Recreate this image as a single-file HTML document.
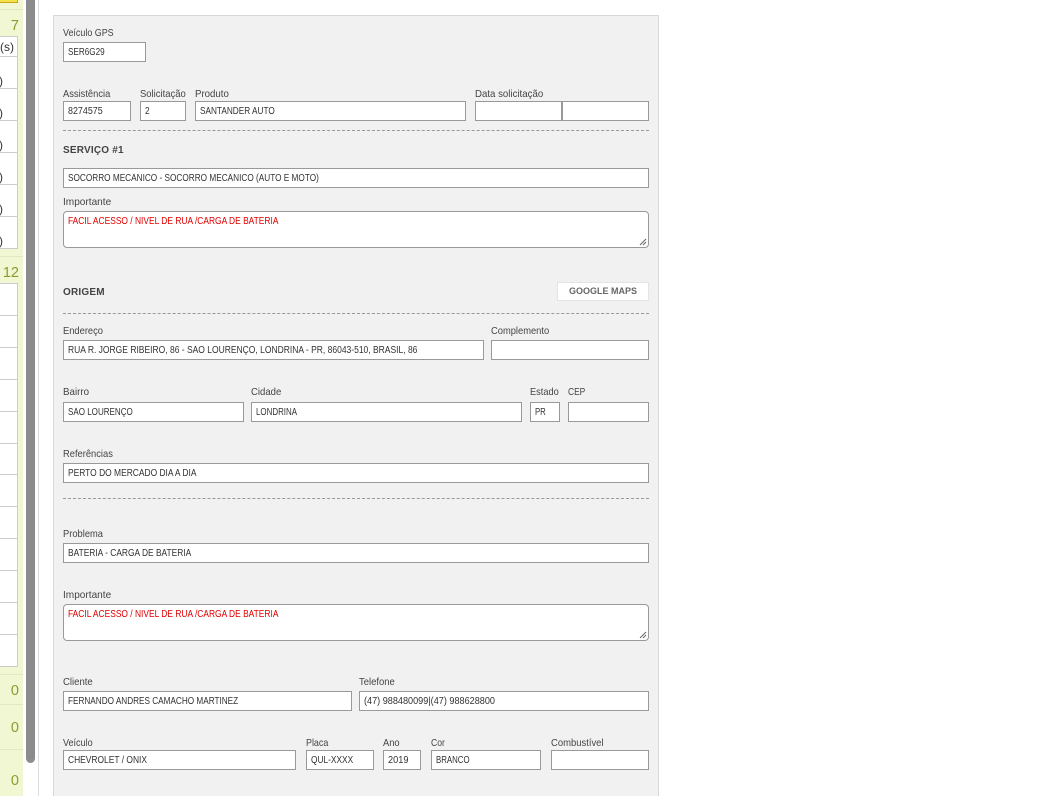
<!DOCTYPE html>
<html lang="pt"><head><meta charset="utf-8"><title>Serviço</title>
<style>
html,body{margin:0;padding:0;width:1040px;height:796px;overflow:hidden;background:#fff}
body{position:relative;font-family:"Liberation Sans",sans-serif;color:#444}
div{position:absolute;box-sizing:border-box}
.l{font-size:10.5px;line-height:12px;height:12px;margin-top:1px;white-space:nowrap;color:#444;transform-origin:0 50%;transform:scaleX(var(--s,.9))}
.i{background:#fff;border:1px solid #999;height:20px;font-size:9.7px;line-height:20px;padding-left:4px;color:#333;white-space:nowrap;overflow:hidden}
.i span,.t span{display:inline-block;transform-origin:0 50%;transform:scaleX(var(--s,.86))}
.t{background:#fff;border:1px solid #999;border-radius:4px;height:37px;font-size:9.7px;line-height:12px;padding:4px 4px;color:#e00000;white-space:nowrap}
.d{left:63px;width:586px;height:0;border-top:1px dashed #999}
.b{font-weight:bold;font-size:10px;line-height:12px;margin-top:2px;color:#444;letter-spacing:.2px}
.s{left:0;width:18px;background:#fff;border:1px solid #ccc;border-left:0;height:33px}
.n{right:1021px;font-size:14.5px;line-height:16px;margin-top:1px;color:#8a9c2e;text-align:right}
.h{left:0;width:23px;height:1px;background:#e2e8c4}
.p{left:0;font-size:12px;line-height:14px;color:#333}
</style></head><body>
<div style="left:0;top:0;width:23px;height:796px;background:#f1f7d2"></div>
<div style="left:0;top:0;width:18px;height:3px;background:#f5e04a;border:1px solid #c9a818;border-top:0;border-left:0"></div>
<div class="h" style="top:9px"></div>
<div class="n" style="top:17px">7</div>
<div class="s" style="top:36px;height:21px"></div>
<div class="s" style="top:56px"></div><div class="s" style="top:88px"></div><div class="s" style="top:120px"></div>
<div class="s" style="top:152px"></div><div class="s" style="top:184px"></div><div class="s" style="top:216px"></div>
<div class="p" style="top:40px">(s)</div>
<div class="p" style="top:74px;left:-1px">)</div><div class="p" style="top:106px;left:-1px">)</div><div class="p" style="top:138px;left:-1px">)</div>
<div class="p" style="top:170px;left:-1px">)</div><div class="p" style="top:202px;left:-1px">)</div><div class="p" style="top:234px;left:-1px">)</div>
<div class="h" style="top:256px"></div>
<div class="n" style="top:264px">12</div>
<div class="s" style="top:283px"></div><div class="s" style="top:315px"></div><div class="s" style="top:347px"></div>
<div class="s" style="top:379px"></div><div class="s" style="top:411px"></div><div class="s" style="top:443px"></div>
<div class="s" style="top:474px"></div><div class="s" style="top:506px"></div><div class="s" style="top:538px"></div>
<div class="s" style="top:570px"></div><div class="s" style="top:602px"></div><div class="s" style="top:634px"></div>
<div class="h" style="top:674px"></div>
<div class="n" style="top:682px">0</div>
<div class="h" style="top:704px"></div>
<div class="n" style="top:719px">0</div>
<div class="h" style="top:749px"></div>
<div class="n" style="top:772px">0</div>
<div style="left:26px;top:0;width:9px;height:763px;background:#8c8c8c;border-radius:0 0 5px 5px"></div>
<div style="left:38px;top:0;width:1px;height:796px;background:#ddd"></div>

<div style="left:53px;top:15px;width:606px;height:800px;background:#f1f1f1;border:1px solid #d8d8d8"></div>

<div class="l" style="left:63px;top:26px;--s:.85">Veículo GPS</div>
<div class="i" style="left:63px;top:42px;width:83px"><span style="--s:.84">SER6G29</span></div>

<div class="l" style="left:63px;top:87px;--s:.89">Assistência</div>
<div class="l" style="left:140px;top:87px">Solicitação</div>
<div class="l" style="left:195px;top:87px;--s:.92">Produto</div>
<div class="l" style="left:475px;top:87px;--s:.92">Data solicitação</div>
<div class="i" style="left:63px;top:101px;width:68px"><span style="--s:.92">8274575</span></div>
<div class="i" style="left:140px;top:101px;width:46px"><span>2</span></div>
<div class="i" style="left:195px;top:101px;width:271px"><span style="--s:.85">SANTANDER AUTO</span></div>
<div class="i" style="left:475px;top:101px;width:87px"></div>
<div class="i" style="left:562px;top:101px;width:87px"></div>
<div class="d" style="top:130px"></div>
<div class="b" style="left:63px;top:143px">SERVIÇO #1</div>
<div class="i" style="left:63px;top:168px;width:586px"><span style="--s:.85">SOCORRO MECÂNICO - SOCORRO MECÂNICO (AUTO E MOTO)</span></div>
<div class="l" style="left:63px;top:195px;--s:.96">Importante</div>
<div class="t" style="left:63px;top:211px;width:586px"><span style="--s:.868">FACIL ACESSO / NIVEL DE RUA /CARGA DE BATERIA</span>
<svg style="position:absolute;right:1px;bottom:1px" width="8" height="8"><path d="M1 7L7 1M4 7L7 4" stroke="#666" stroke-width="1" fill="none"/></svg></div>

<div class="b" style="left:63px;top:285px">ORIGEM</div>
<div style="left:557px;top:282px;width:92px;height:19px;background:#fff;border:1px solid #e4e4e4;text-align:center;font-size:9px;font-weight:bold;line-height:17px;color:#666">GOOGLE MAPS</div>
<div class="d" style="top:313px"></div>

<div class="l" style="left:63px;top:324px;--s:.89">Endereço</div>
<div class="l" style="left:491px;top:324px;--s:.89">Complemento</div>
<div class="i" style="left:63px;top:340px;width:421px"><span style="--s:.877">RUA R. JORGE RIBEIRO, 86 - SÃO LOURENÇO, LONDRINA - PR, 86043-510, BRASIL, 86</span></div>
<div class="i" style="left:491px;top:340px;width:158px"></div>

<div class="l" style="left:63px;top:385px;--s:.93">Bairro</div>
<div class="l" style="left:251px;top:385px;--s:.91">Cidade</div>
<div class="l" style="left:530px;top:385px;--s:.88">Estado</div>
<div class="l" style="left:568px;top:385px;--s:.8">CEP</div>
<div class="i" style="left:63px;top:402px;width:181px"><span style="--s:.83">SÃO LOURENÇO</span></div>
<div class="i" style="left:251px;top:402px;width:271px"><span style="--s:.82">LONDRINA</span></div>
<div class="i" style="left:530px;top:402px;width:30px"><span style="--s:.8">PR</span></div>
<div class="i" style="left:568px;top:402px;width:81px"></div>

<div class="l" style="left:63px;top:447px;--s:.89">Referências</div>
<div class="i" style="left:63px;top:463px;width:586px"><span style="--s:.87">PERTO DO MERCADO DIA A DIA</span></div>
<div class="d" style="top:498px"></div>

<div class="l" style="left:63px;top:527px;--s:.89">Problema</div>
<div class="i" style="left:63px;top:543px;width:586px"><span style="--s:.866">BATERIA - CARGA DE BATERIA</span></div>

<div class="l" style="left:63px;top:588px;--s:.96">Importante</div>
<div class="t" style="left:63px;top:604px;width:586px"><span style="--s:.868">FACIL ACESSO / NIVEL DE RUA /CARGA DE BATERIA</span>
<svg style="position:absolute;right:1px;bottom:1px" width="8" height="8"><path d="M1 7L7 1M4 7L7 4" stroke="#666" stroke-width="1" fill="none"/></svg></div>

<div class="l" style="left:63px;top:675px;--s:.91">Cliente</div>
<div class="l" style="left:359px;top:675px">Telefone</div>
<div class="i" style="left:63px;top:691px;width:289px"><span style="--s:.846">FERNANDO ANDRES CAMACHO MARTINEZ</span></div>
<div class="i" style="left:359px;top:691px;width:290px"><span style="--s:.94">(47) 988480099|(47) 988628800</span></div>

<div class="l" style="left:63px;top:736px;--s:.86">Veículo</div>
<div class="l" style="left:306px;top:736px;--s:.85">Placa</div>
<div class="l" style="left:383px;top:736px;--s:.89">Ano</div>
<div class="l" style="left:431px;top:736px;--s:.82">Cor</div>
<div class="l" style="left:551px;top:736px">Combustível</div>
<div class="i" style="left:63px;top:750px;width:233px"><span style="--s:.87">CHEVROLET / ONIX</span></div>
<div class="i" style="left:306px;top:750px;width:68px"><span style="--s:.86">QUL-XXXX</span></div>
<div class="i" style="left:383px;top:750px;width:38px"><span style="--s:.95">2019</span></div>
<div class="i" style="left:431px;top:750px;width:110px"><span style="--s:.81">BRANCO</span></div>
<div class="i" style="left:551px;top:750px;width:98px"></div>
</body></html>
